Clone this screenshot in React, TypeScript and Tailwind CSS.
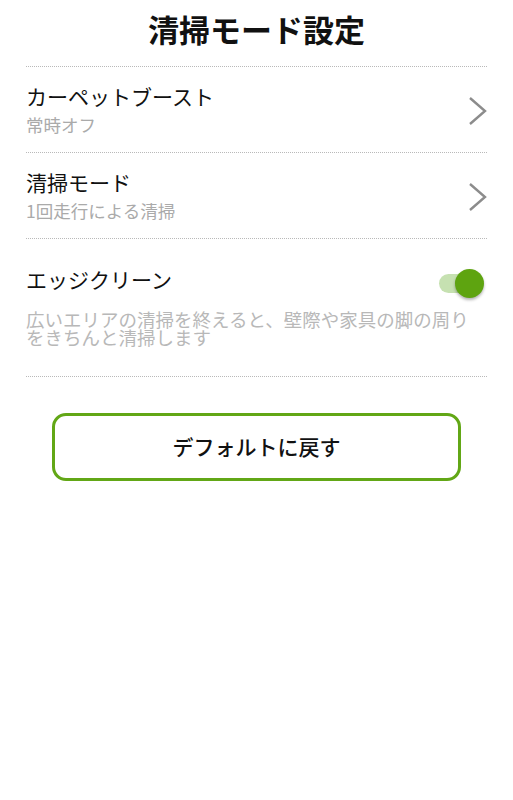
const font = { fontFamily: '"Noto Sans CJK JP", "Noto Sans", sans-serif' };

function Dots() {
  return <div className="mx-[26px] border-t border-dotted border-[#b9b9b9]" />;
}

function LinkRow({ title, sub }: { title: string; sub: string }) {
  return (
    <div className="flex h-[85px] items-center justify-between pl-[26px] pr-[24px]">
      <div className="flex flex-col">
        <span className="text-[21px] leading-[31px] text-[#111]">{title}</span>
        <span className="text-[17.5px] leading-[26px] text-[#aaaaaa]">{sub}</span>
      </div>
      <svg width="22" height="30" viewBox="0 0 22 30" fill="none" className="mt-[2px]">
        <path d="M3 2 L18 15 L3 28" stroke="#8c8c8c" strokeWidth="2.4" />
      </svg>
    </div>
  );
}

export default function App() {
  return (
    <div className="min-h-[800px] w-full bg-white" style={font}>
      <div className="flex h-[66px] items-center justify-center pb-[9px]">
        <h1 className="text-[31px] font-bold leading-none text-[#111]">清掃モード設定</h1>
      </div>
      <Dots />
      <LinkRow title="カーペットブースト" sub="常時オフ" />
      <Dots />
      <LinkRow title="清掃モード" sub="1回走行による清掃" />
      <Dots />
      <div className="h-[137px] px-[26px] pt-[24px]">
        <div className="flex items-center justify-between">
          <span className="text-[21px] leading-[32px] text-[#111]">エッジクリーン</span>
          <div className="relative mr-[10px] mt-[8px] h-[19px] w-[38px]">
            <div className="absolute left-0 top-0 h-[19px] w-[38px] rounded-full bg-[#c6e1b1]" />
            <div className="absolute -right-[7px] -top-[5px] h-[29px] w-[29px] rounded-full bg-[#5ea410] shadow-[0_2px_3px_rgba(0,0,0,0.3)]" />
          </div>
        </div>
        <p className="mt-[15px] text-[18.5px] leading-[18px] text-[#b8b8b8]">
          広いエリアの清掃を終えると、壁際や家具の脚の周りをきちんと清掃します
        </p>
      </div>
      <Dots />
      <div className="px-[52px] pt-[36px]">
        <button className="flex h-[68px] w-full items-center justify-center rounded-[14px] border-[3px] border-[#62a716] bg-white text-[21px] font-medium text-[#111]">
          デフォルトに戻す
        </button>
      </div>
    </div>
  );
}
